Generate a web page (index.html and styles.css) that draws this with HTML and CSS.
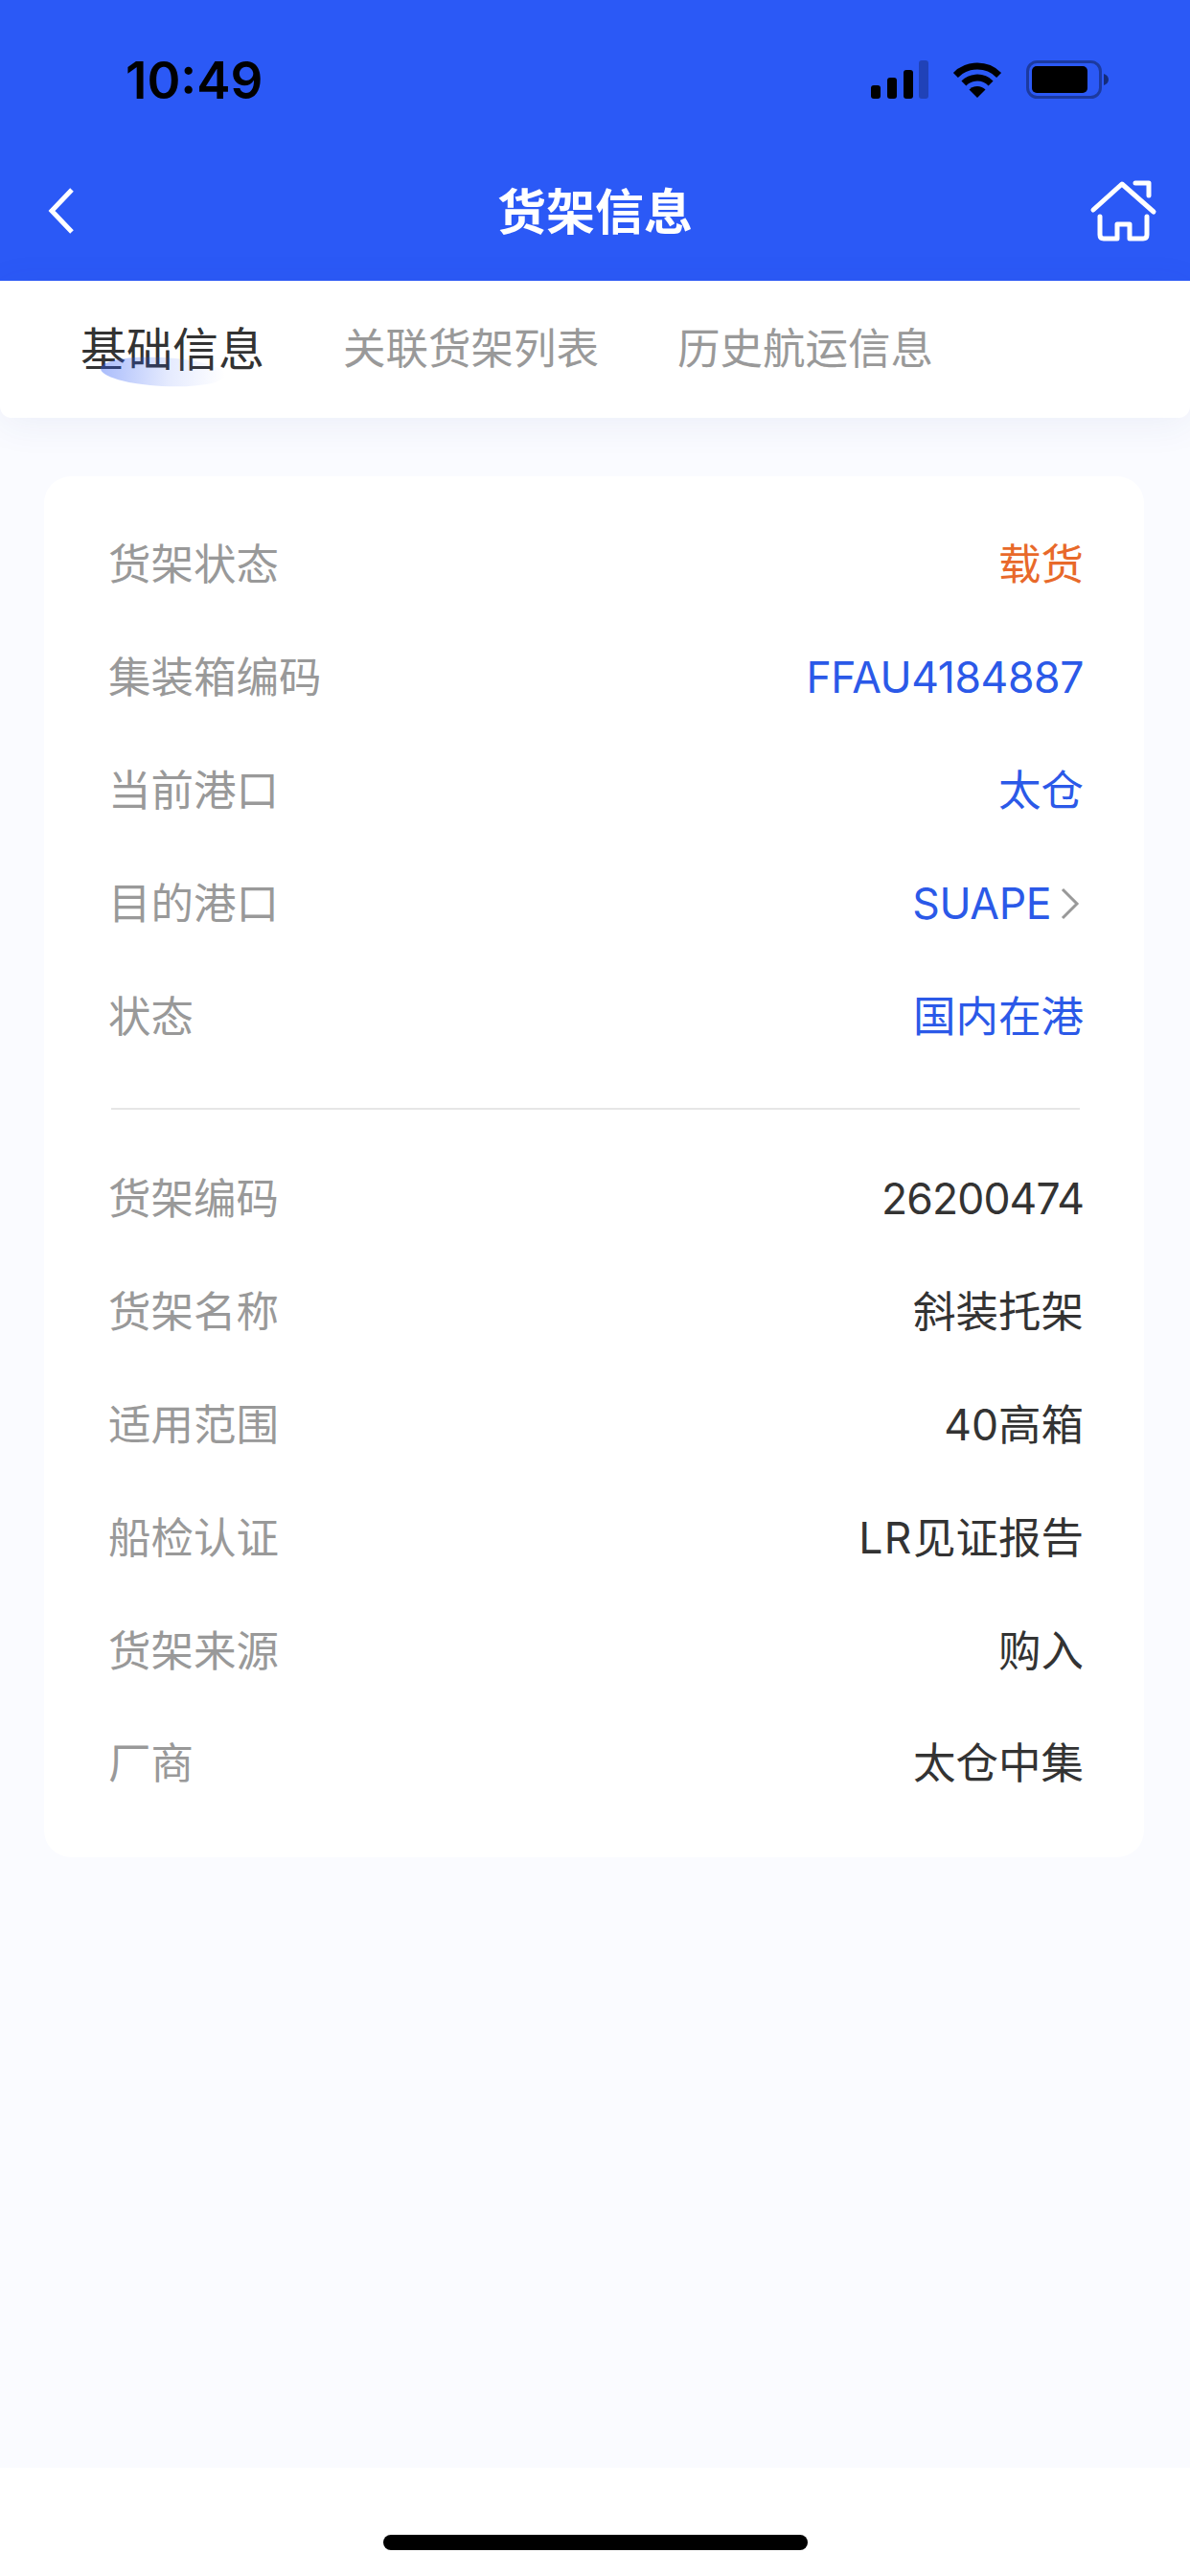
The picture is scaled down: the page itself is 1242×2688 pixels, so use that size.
FILE: index.html
```html
<!DOCTYPE html>
<html>
<head>
    <meta charset="utf-8">
    <title>货架信息</title>
    <link rel="stylesheet" href="styles.css">
</head>
<body>
    <div class="header">
        <div class="status-bar">
            <span class="time">10:49</span>
            <div class="status-icons">
                <svg class="signal" width="60" height="40" viewBox="0 0 60 40">
                    <rect x="0" y="26" width="10" height="14" rx="3" fill="#000"/>
                    <rect x="17" y="18" width="10" height="22" rx="3" fill="#000"/>
                    <rect x="34" y="10" width="10" height="30" rx="3" fill="#000"/>
                    <rect x="50" y="0" width="10" height="40" rx="3" fill="#000" opacity="0.25"/>
                </svg>
                <svg class="wifi" width="54" height="40" viewBox="0 0 54 40">
                    <path d="M4.4 15.4A32 32 0 0 1 49.6 15.4" fill="none" stroke="#000" stroke-width="7"/>
                    <path d="M12.9 23.9A20 20 0 0 1 41.1 23.9" fill="none" stroke="#000" stroke-width="7"/>
                    <path d="M27 39L18.5 30.5A12 12 0 0 1 35.5 30.5Z" fill="#000"/>
                </svg>
                <svg class="battery" width="87" height="40" viewBox="0 0 87 40">
                    <rect x="1.5" y="1.5" width="76" height="37" rx="10" fill="none" stroke="#000" stroke-width="3" opacity="0.35"/>
                    <rect x="6" y="6" width="58" height="28" rx="5" fill="#000"/>
                    <path d="M81 14C84 15 86 17 86 20C86 23 84 25 81 26Z" fill="#000" opacity="0.5"/>
                </svg>
            </div>
        </div>
        <div class="nav-bar">
            <svg class="back" width="28" height="48" viewBox="0 0 28 48">
                <path d="M25 2L4 24L25 46" fill="none" stroke="#fff" stroke-width="5"/>
            </svg>
            <h1>货架信息</h1>
            <svg class="home" width="72" height="68" viewBox="0 0 72 68">
                <path d="M5 32L35 5L68 34" fill="none" stroke="#fff" stroke-width="5" stroke-linecap="round" stroke-linejoin="round"/>
                <path d="M49 4H63V17" fill="none" stroke="#fff" stroke-width="5" stroke-linecap="round" stroke-linejoin="round"/>
                <path d="M12 39V58Q12 62 16 62H30V47H43V62H57Q61 62 61 58V39" fill="none" stroke="#fff" stroke-width="5" stroke-linecap="round" stroke-linejoin="round"/>
            </svg>
        </div>
    </div>

    <div class="tabs">
        <div class="tab active">基础信息</div>
        <div class="tab">关联货架列表</div>
        <div class="tab">历史航运信息</div>
    </div>

    <div class="main">
        <div class="card">
            <div class="row"><span class="label">货架状态</span><span class="value orange">载货</span></div>
            <div class="row"><span class="label">集装箱编码</span><span class="value blue latin">FFAU4184887</span></div>
            <div class="row"><span class="label">当前港口</span><span class="value blue">太仓</span></div>
            <div class="row">
                <span class="label">目的港口</span>
                <span class="value blue link latin">SUAPE
                    <svg class="more" width="20" height="34" viewBox="0 0 20 34">
                        <path d="M2 2L17 17L2 32" fill="none" stroke="#999" stroke-width="3"/>
                    </svg>
                </span>
            </div>
            <div class="row"><span class="label">状态</span><span class="value blue">国内在港</span></div>

            <div class="divider"></div>

            <div class="row"><span class="label">货架编码</span><span class="value digits">26200474</span></div>
            <div class="row"><span class="label">货架名称</span><span class="value">斜装托架</span></div>
            <div class="row"><span class="label">适用范围</span><span class="value">40高箱</span></div>
            <div class="row"><span class="label">船检认证</span><span class="value"><span class="wide">LR</span>见证报告</span></div>
            <div class="row"><span class="label">货架来源</span><span class="value">购入</span></div>
            <div class="row"><span class="label">厂商</span><span class="value">太仓中集</span></div>
        </div>
    </div>

    <div class="home-area">
        <div class="home-bar"></div>
    </div>
</body>
</html>
```

FILE: styles.css
```css
* {
    box-sizing: border-box;
}

body {
    margin: 0;
    height: 2688px;
    display: flex;
    flex-direction: column;
    font-family: Inter, "Noto Sans CJK SC", sans-serif;
    background: #fafbff;
    color: #333;
}

.header {
    height: 293px;
    background: #2b59f6;
}

.status-bar {
    height: 148px;
    padding: 60px 91px 0 131px;
    display: flex;
    justify-content: space-between;
    align-items: flex-start;
}

.time {
    font-size: 53px;
    line-height: 48px;
    font-weight: 600;
    color: #000;
}

.status-icons {
    display: flex;
    align-items: center;
    gap: 24px;
    margin-top: 3px;
}

.battery {
    margin-right: -7px;
}

.nav-bar {
    height: 145px;
    padding: 0 34px 0 50px;
    display: grid;
    grid-template-columns: 1fr auto 1fr;
    align-items: center;
}

.nav-bar h1 {
    margin: -6px 16px 0 0;
    font-size: 51px;
    font-weight: 700;
    color: #fff;
}

.back {
    margin-top: -2px;
}

.home {
    justify-self: end;
    margin-top: 1px;
}

.tabs {
    position: relative;
    height: 143px;
    padding: 0 0 8px 84px;
    display: flex;
    align-items: center;
    gap: 82px;
    background: #fff;
    border-radius: 0 0 12px 12px;
    box-shadow: 0 6px 40px rgba(40, 70, 160, 0.07);
}

.tab {
    position: relative;
    font-size: 44.5px;
    color: #999;
}

.tab.active {
    font-size: 48px;
    color: #333;
}

/* soft brush mark under the active tab */
.tab.active::after {
    content: "";
    position: absolute;
    left: 21px;
    bottom: -7px;
    width: 130px;
    height: 30px;
    border-radius: 50%;
    background: linear-gradient(90deg, rgba(43, 89, 246, 0.4), rgba(43, 89, 246, 0.12) 55%, rgba(43, 89, 246, 0));
    transform: rotate(3deg);
}

.main {
    flex: 1;
    padding: 61px 48px 0 46px;
}

.card {
    padding: 33px 63px 39px 67px;
    background: #fff;
    border-radius: 28px;
}

.row {
    height: 117.8px;
    padding-top: 1px;
    display: flex;
    justify-content: space-between;
    align-items: center;
    font-size: 44.5px;
    line-height: 60px;
}

.label {
    color: #999;
}

.value {
    color: #333;
}

.latin {
    letter-spacing: -0.4px;
}

.digits {
    letter-spacing: -0.9px;
}

.wide {
    letter-spacing: 1.5px;
}

.blue {
    color: #2b59e8;
}

.orange {
    color: #e8692a;
}

.link {
    display: flex;
    align-items: center;
    gap: 10px;
    margin-right: 4px;
}

.divider {
    height: 2px;
    margin: 37px 4px 34px 3px;
    background: #e6e6e6;
}

.home-area {
    height: 113px;
    padding-top: 70px;
    background: #fff;
}

.home-bar {
    width: 443px;
    height: 16px;
    margin: 0 auto;
    border-radius: 8px;
    background: #000;
}
```
